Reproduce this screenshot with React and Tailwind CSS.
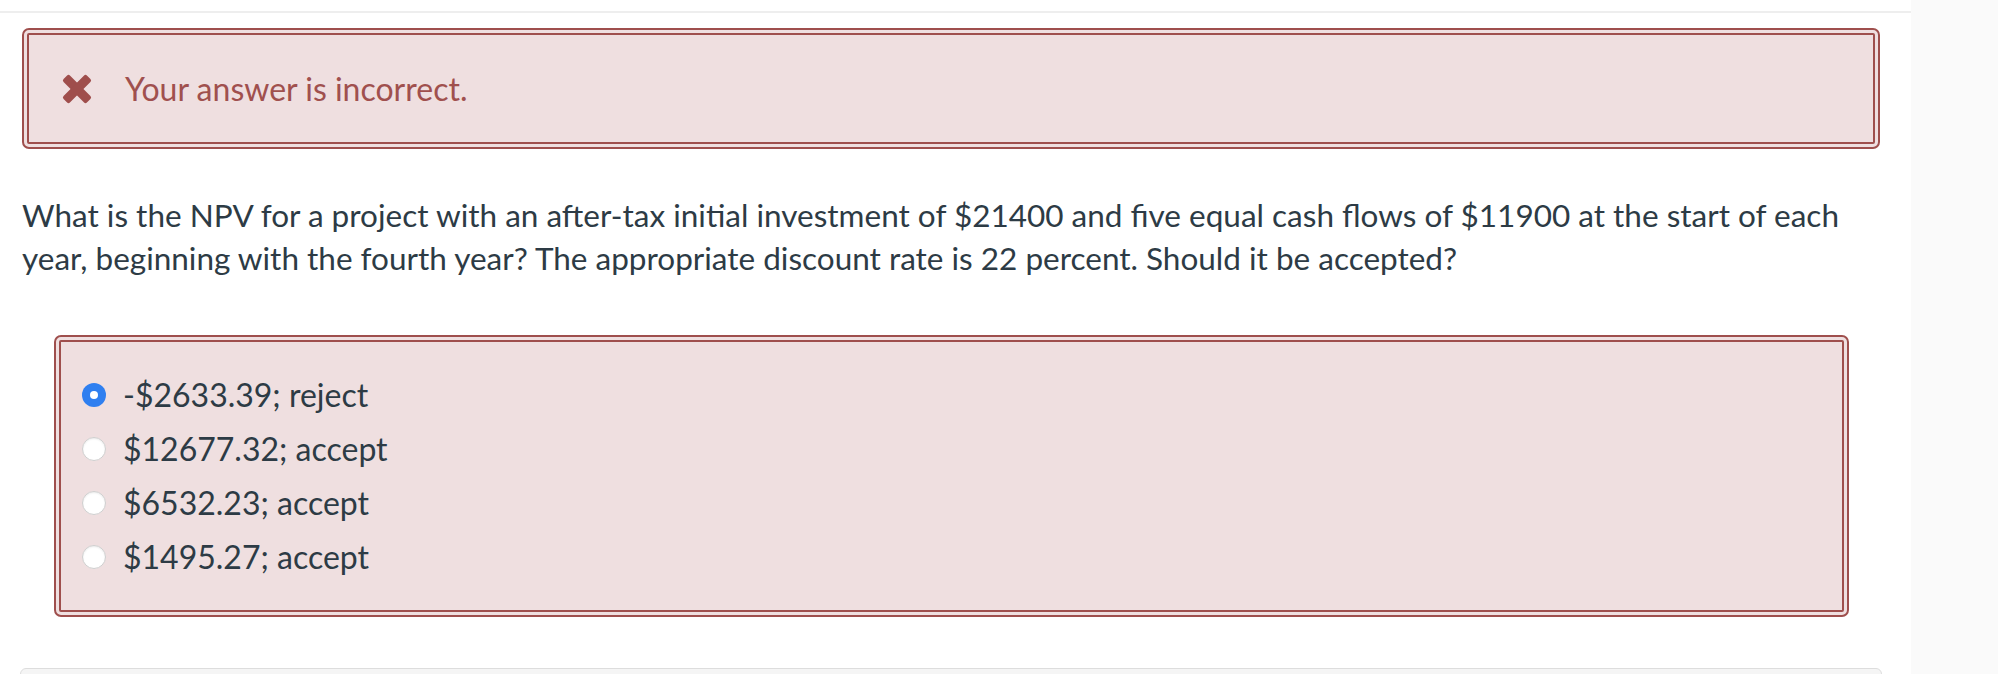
import React from "react";

function XIcon() {
  return (
    <svg width="30" height="30" viewBox="0 0 30 30" className="shrink-0">
      <rect x="-1.5" y="10.5" width="33" height="9" rx="2" fill="#9f4e4c" transform="rotate(45 15 15)" />
      <rect x="-1.5" y="10.5" width="33" height="9" rx="2" fill="#9f4e4c" transform="rotate(-45 15 15)" />
    </svg>
  );
}

function Radio({ checked }) {
  if (checked) {
    return (
      <span className="w-[24px] h-[24px] rounded-full bg-[#2f7ff0] flex items-center justify-center shrink-0">
        <span className="w-[8px] h-[8px] rounded-full bg-white" />
      </span>
    );
  }
  return (
    <span className="w-[24px] h-[24px] rounded-full bg-white border border-[#cfcfcf] shadow-[inset_0_1px_2px_rgba(0,0,0,0.08)] shrink-0" />
  );
}

const answers = [
  { text: "-$2633.39; reject", checked: true },
  { text: "$12677.32; accept", checked: false },
  { text: "$6532.23; accept", checked: false },
  { text: "$1495.27; accept", checked: false },
];

export default function App() {
  return (
    <div className="flex w-[1998px] h-[674px] overflow-hidden bg-white font-['Lato',sans-serif]">
      <div className="w-[1911px] pt-[11px] flex flex-col">
        <div className="border-t-2 border-[#eeeeee] pl-[22px] pr-[31px] pt-[15px]">
          <div className="h-[121px] border-[7px] border-double border-[#9f4f4d] rounded-[7px] bg-[#efdfe0] flex items-center pl-[33px] gap-[33px]">
            <XIcon />
            <span className="text-[32px] leading-none text-[#a0504e]">Your answer is incorrect.</span>
          </div>
          <p className="mt-[45px] text-[31.5px] leading-[43px] text-[#2d3b45]">
            What is the NPV for a project with an after-tax initial investment of $21400 and five equal cash flows of $11900 at the start of each year, beginning with the fourth year? The appropriate discount rate is 22 percent. Should it be accepted?
          </p>
          <div className="mt-[55px] ml-[32px] mr-[31px] border-[7px] border-double border-[#9f4f4d] rounded-[7px] bg-[#efdfe0] py-[26px] pl-[21px]">
            {answers.map((a) => (
              <div key={a.text} className="h-[54px] flex items-center gap-[17px]">
                <Radio checked={a.checked} />
                <span className="text-[32px] leading-none text-[#2d3b45]">{a.text}</span>
              </div>
            ))}
          </div>
          <div className="mt-[51px] -mx-[2px] h-[40px] rounded-[6px] border border-[#dddddd] bg-[#f5f5f5]" />
        </div>
      </div>
      <div className="flex-1 bg-[#fafafa]" />
    </div>
  );
}
